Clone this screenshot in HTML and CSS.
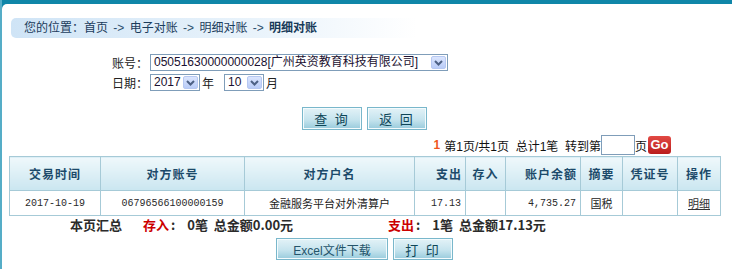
FILE: index.html
```html
<!DOCTYPE html>
<html lang="zh-CN">
<head>
    <meta charset="UTF-8">
    <title>明细对账</title>
    <link rel="stylesheet" href="styles.css">
</head>
<body>
<div class="frame">
    <div class="page">
        <div class="crumb">
            您的位置：首页 <span class="arrow">-&gt;</span> 电子对账 <span class="arrow">-&gt;</span> 明细对账 <span class="arrow">-&gt;</span> <b>明细对账</b>
        </div>

        <div class="query-form">
            <div class="form-row">
                <span class="label">账号：</span>
                <div class="select select-account">
                    <span class="select-text">05051630000000028[广州英资教育科技有限公司]</span>
                    <span class="select-btn"><svg width="9" height="6" viewBox="0 0 9 6"><path d="M1 1 L4.5 4.5 L8 1" fill="none" stroke="#4d6185" stroke-width="2"/></svg></span>
                </div>
            </div>
            <div class="form-row">
                <span class="label">日期：</span>
                <div class="select select-year">
                    <span class="select-text">2017</span>
                    <span class="select-btn"><svg width="9" height="6" viewBox="0 0 9 6"><path d="M1 1 L4.5 4.5 L8 1" fill="none" stroke="#4d6185" stroke-width="2"/></svg></span>
                </div>
                <span class="unit">年</span>
                <div class="select select-month">
                    <span class="select-text">10</span>
                    <span class="select-btn"><svg width="9" height="6" viewBox="0 0 9 6"><path d="M1 1 L4.5 4.5 L8 1" fill="none" stroke="#4d6185" stroke-width="2"/></svg></span>
                </div>
                <span class="unit">月</span>
            </div>
        </div>

        <div class="btn-row top-btns">
            <button class="btn">查 询</button>
            <button class="btn">返 回</button>
        </div>

        <div class="pager">
            <span class="cur">1</span>
            <span>第1页/共1页&nbsp;&nbsp;总计1笔&nbsp;&nbsp;转到第</span>
            <input class="page-input" type="text">
            <span>页</span>
            <span class="go">Go</span>
        </div>

        <table class="detail">
            <colgroup>
                <col style="width:91px">
                <col style="width:144px">
                <col style="width:170px">
                <col style="width:51px">
                <col style="width:40px">
                <col style="width:75px">
                <col style="width:42px">
                <col style="width:55px">
                <col style="width:43px">
            </colgroup>
            <thead>
                <tr>
                    <th>交易时间</th>
                    <th>对方账号</th>
                    <th>对方户名</th>
                    <th class="right">支出</th>
                    <th>存入</th>
                    <th class="right">账户余额</th>
                    <th>摘要</th>
                    <th>凭证号</th>
                    <th>操作</th>
                </tr>
            </thead>
            <tbody>
                <tr>
                    <td class="num">2017-10-19</td>
                    <td class="num">06796566100000159</td>
                    <td>金融服务平台对外清算户</td>
                    <td class="num right">17.13</td>
                    <td></td>
                    <td class="num right">4,735.27</td>
                    <td>国税</td>
                    <td></td>
                    <td><a href="#">明细</a></td>
                </tr>
            </tbody>
        </table>

        <div class="summary">
            <span>本页汇总</span>
            <span class="in-label">存入</span><span class="colon">:</span>
            <span class="amount">0笔&nbsp;&nbsp;总金额0.00元</span>
            <span class="out-label">支出</span><span class="colon">:</span>
            <span class="amount">1笔&nbsp;&nbsp;总金额17.13元</span>
        </div>

        <div class="btn-row bottom-btns">
            <button class="btn btn-wide">Excel文件下载</button>
            <button class="btn">打 印</button>
        </div>
    </div>
</div>
</body>
</html>
```

FILE: styles.css
```css
html, body {
    margin: 0;
    padding: 0;
    background-color: #fff;
}
body {
    font-family: 'Liberation Sans', 'Noto Sans CJK SC', sans-serif;
    font-size: 12px;
    color: #222;
}
.frame {
    background-color: #0f86a8;
    border-left: 2px solid #55adc7;
    padding-top: 4px;
    height: 265px;
}
.page {
    background-color: #fff;
    border-top-left-radius: 5px;
    height: 265px;
    overflow: hidden;
}
.crumb {
    margin: 14px 0 0 9px;
    width: 393px;
    height: 20px;
    line-height: 20px;
    padding-left: 13px;
    border-radius: 5px 0 0 5px;
    background: linear-gradient(to right, #cfe4f6, #e9f3fb 60%, #fff);
    color: #1b3c5c;
}
.crumb .arrow {
    color: #2d4f6e;
    margin: 0 2px;
}
.crumb b {
    color: #173a58;
}
.query-form {
    margin-top: 16px;
    padding-left: 110px;
}
.form-row {
    display: flex;
    align-items: center;
    height: 17px;
    margin-bottom: 3px;
}
.label {
    width: 38px;
    color: #222;
}
.select {
    display: flex;
    align-items: center;
    box-sizing: border-box;
    height: 17px;
    border: 1px solid #7f9db9;
    background-color: #fff;
    padding: 0 1px 0 3px;
}
.select-text {
    flex: 1;
    white-space: nowrap;
    line-height: 15px;
    color: #1a1030;
}
.select-btn {
    display: flex;
    align-items: center;
    justify-content: center;
    width: 15px;
    height: 13px;
    box-sizing: border-box;
    border: 1px solid #b6c8f2;
    border-radius: 2px;
    background: linear-gradient(#dbe5fd, #b9ccf8);
}
.select-account {
    width: 298px;
}
.select-year {
    width: 50px;
}
.select-month {
    width: 40px;
}
.unit {
    margin: 0 10px 0 2px;
}
.btn-row {
    display: flex;
    justify-content: center;
    gap: 5px;
    padding-right: 5px;
}
.top-btns {
    margin-top: 16px;
}
.btn {
    width: 60px;
    height: 23px;
    padding: 0;
    border: 1px solid #79b7cb;
    box-shadow: inset 0 0 0 1px #f4fbfd;
    background: linear-gradient(#e3f2f7, #c6e4ee 55%, #98cbdc);
    font-family: 'Liberation Sans', 'Noto Sans CJK SC', sans-serif;
    font-size: 13px;
    color: #0e4658;
    letter-spacing: 2px;
    cursor: pointer;
}
.btn-wide {
    width: 112px;
    letter-spacing: 0;
    font-size: 12px;
    color: #24546a;
}
.bottom-btns .btn {
    height: 22px;
}
.pager {
    display: flex;
    justify-content: flex-end;
    align-items: center;
    height: 22px;
    margin-top: 4px;
    padding-right: 61px;
    color: #111;
}
.pager .cur {
    color: #f0561c;
    font-weight: bold;
    margin-right: 4px;
}
.page-input {
    box-sizing: border-box;
    width: 34px;
    height: 20px;
    border: 1px solid #7f9db9;
    margin: 0;
    padding: 0;
}
.go {
    margin-left: 1px;
    width: 23px;
    height: 18px;
    line-height: 18px;
    border-radius: 3px;
    text-align: center;
    background: linear-gradient(#e24a44, #b91c1c);
    color: #fff;
    font-weight: bold;
    font-size: 13px;
}
.detail {
    margin-left: 7px;
    width: 711px;
    border-collapse: collapse;
    table-layout: fixed;
    border: 1px solid #a6cad7;
}
.detail th {
    height: 33px;
    border: 1px solid #a6cad7;
    background: linear-gradient(#eff8fb, #cae6f0);
    color: #1c4a6a;
    font-family: 'Noto Sans CJK SC', sans-serif;
    font-size: 12px;
    letter-spacing: 1px;
    padding: 0 3px;
}
.detail td {
    height: 24px;
    border: 1px solid #a6cad7;
    text-align: center;
    font-family: 'Noto Sans CJK SC', sans-serif;
    font-size: 11px;
    color: #222;
    padding: 0 4px;
    white-space: nowrap;
}
.detail td.num {
    font-family: 'Liberation Mono', monospace;
    font-size: 10px;
    color: #2a2a2a;
}
.detail .right {
    text-align: right;
}
.detail a {
    color: #333;
}
.summary {
    display: flex;
    align-items: center;
    height: 17px;
    padding-left: 68px;
    font-family: 'Noto Sans CJK SC', sans-serif;
    font-size: 13px;
    font-weight: bold;
    color: #2b2b2b;
}
.in-label, .out-label {
    color: #cc0000;
}
.in-label {
    margin-left: 21px;
}
.out-label {
    margin-left: 95px;
}
.colon {
    margin: 0 12px 0 2px;
}
.bottom-btns {
    margin-top: 5px;
}
```
